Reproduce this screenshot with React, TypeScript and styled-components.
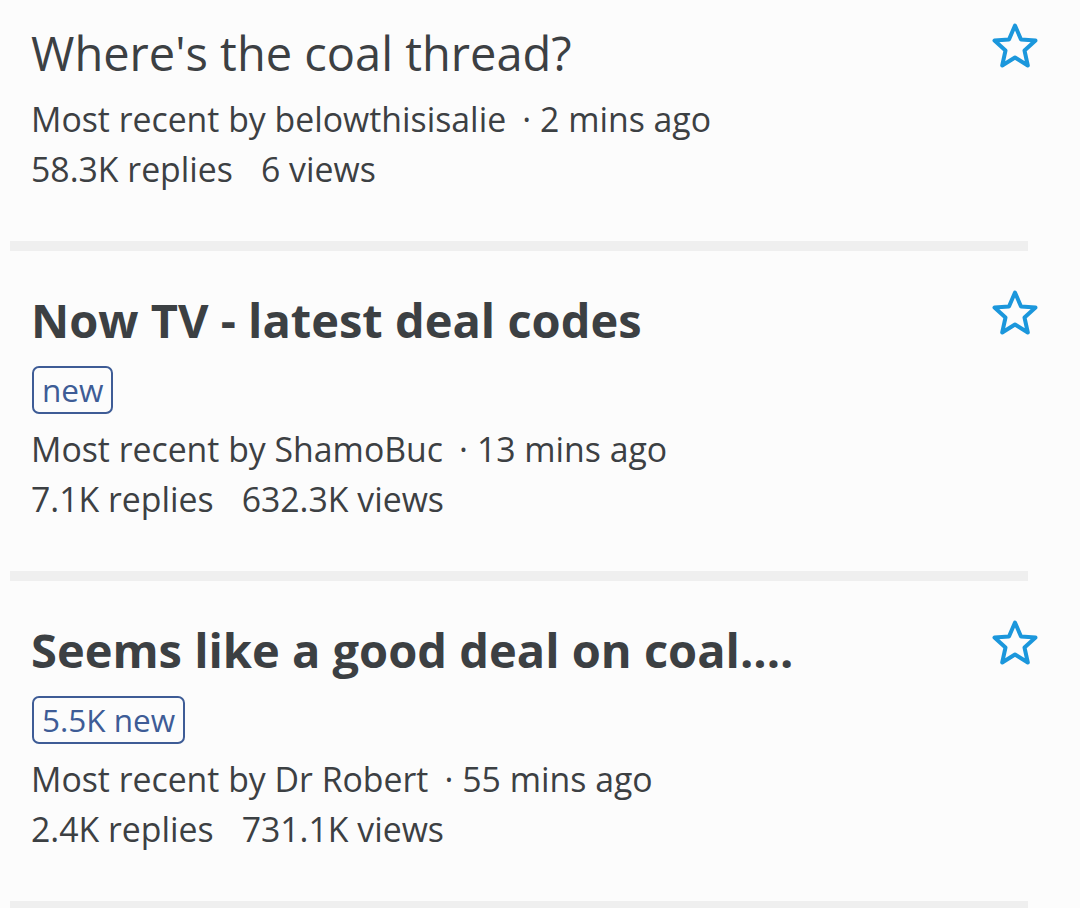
import React from "react";
import styled, { createGlobalStyle } from "styled-components";

const GlobalStyle = createGlobalStyle`
   html, body {
      margin: 0;
      padding: 0;
      background: #fcfcfc;
   }
   body {
      font-family: "Open Sans", "Noto Sans", sans-serif;
      color: #3c4043;
   }
`;

const ThreadList = styled.div`
   display: flex;
   flex-direction: column;
   margin-top: -16px;
`;

const ThreadRow = styled.div`
   display: flex;
   align-items: flex-start;
   padding: 38px 41px 47px 31px;
`;

const ThreadBody = styled.div`
   flex: 1;
   display: flex;
   flex-direction: column;
   align-items: flex-start;
`;

const ThreadTitle = styled.div<{ unread: boolean }>`
   font-size: 47px;
   line-height: 62px;
   font-weight: ${({ unread }) => (unread ? 700 : 400)};
   margin-bottom: 10px;
`;

const NewBadge = styled.span`
   display: inline-block;
   font-size: 31.5px;
   line-height: 40px;
   padding: 2px 8px;
   border: 2px solid #3e5c96;
   border-radius: 7px;
   color: #3e5c96;
   margin: 5px 0 10px 1px;
`;

const MetaLine = styled.div`
   font-size: 33.8px;
   line-height: 50px;
`;

const Dot = styled.span`
   margin: 0 9px 0 16px;
`;

const Stat = styled.span`
   margin-right: 28px;
`;

const StarButton = styled.button`
   flex: none;
   width: 48px;
   height: 48px;
   padding: 0;
   margin: 0;
   border: none;
   background: none;
   display: flex;
`;

const Divider = styled.div`
   height: 10px;
   margin: 0 52px 0 10px;
   background: #efefef;
`;

const StarIcon: React.FC = () => (
   <svg width="48" height="48" viewBox="0 0 48 48">
      <polygon
         points="24,3.5 30,17.5 44.5,18.5 33.5,28.5 36.8,43.5 24,35.5 11.2,43.5 14.5,28.5 3.5,18.5 18,17.5"
         fill="none"
         stroke="#1b97dc"
         strokeWidth="4"
         strokeLinejoin="round"
      />
   </svg>
);

interface Thread {
   title: string;
   unread: boolean;
   badge?: string;
   author: string;
   ago: string;
   replies: string;
   views: string;
}

const threads: Thread[] = [
   {
      title: "Where's the coal thread?",
      unread: false,
      author: "belowthisisalie",
      ago: "2 mins ago",
      replies: "58.3K replies",
      views: "6 views",
   },
   {
      title: "Now TV - latest deal codes",
      unread: true,
      badge: "new",
      author: "ShamoBuc",
      ago: "13 mins ago",
      replies: "7.1K replies",
      views: "632.3K views",
   },
   {
      title: "Seems like a good deal on coal....",
      unread: true,
      badge: "5.5K new",
      author: "Dr Robert",
      ago: "55 mins ago",
      replies: "2.4K replies",
      views: "731.1K views",
   },
];

const ThreadItem: React.FC<{ thread: Thread }> = ({ thread }) => (
   <>
      <ThreadRow>
         <ThreadBody>
            <ThreadTitle unread={thread.unread}>{thread.title}</ThreadTitle>
            {thread.badge && <NewBadge>{thread.badge}</NewBadge>}
            <MetaLine>
               Most recent by {thread.author}
               <Dot>·</Dot>
               {thread.ago}
            </MetaLine>
            <MetaLine>
               <Stat>{thread.replies}</Stat>
               {thread.views}
            </MetaLine>
         </ThreadBody>
         <StarButton aria-label="Bookmark">
            <StarIcon />
         </StarButton>
      </ThreadRow>
      <Divider />
   </>
);

const App: React.FC = () => (
   <>
      <GlobalStyle />
      <ThreadList>
         {threads.map((t) => (
            <ThreadItem key={t.title} thread={t} />
         ))}
      </ThreadList>
   </>
);

export default App;
